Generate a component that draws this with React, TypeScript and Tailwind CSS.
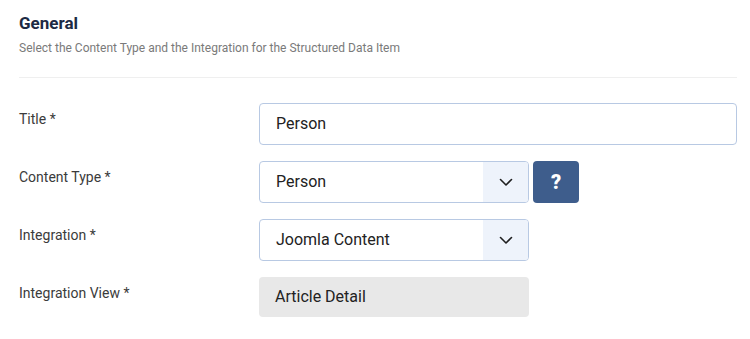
import { ReactNode } from "react";

const font = { fontFamily: "Roboto, 'Liberation Sans', sans-serif" };

function Chevron() {
  return (
    <svg width="14" height="9" viewBox="0 0 14 9" fill="none">
      <path d="M1.5 1.5 7 7l5.5-5.5" stroke="#1f1f1f" strokeWidth="1.6" strokeLinecap="round" strokeLinejoin="round" />
    </svg>
  );
}

function Row({ label, children }: { label: string; children: ReactNode }) {
  return (
    <div className="flex items-start">
      <label className="w-[240px] shrink-0 pt-[6px] text-[14px] leading-5 text-[#3b3b3b]">{label}</label>
      {children}
    </div>
  );
}

function Select({ value }: { value: string }) {
  return (
    <div className="flex h-[42px] w-[270px] overflow-hidden rounded-[4px] border border-[#b8c9e3] bg-white">
      <div className="flex flex-1 items-center pl-4 text-base text-[#222]">{value}</div>
      <div className="flex w-[45px] items-center justify-center bg-[#eef3fb]">
        <Chevron />
      </div>
    </div>
  );
}

export default function App() {
  return (
    <div className="h-[339px] w-[750px] bg-white pl-[19px] pr-[13px] pt-[11px]" style={font}>
      <h2 className="text-[17px] font-bold leading-6 text-[#1d2a44]">General</h2>
      <p className="mt-[4px] text-[12px] leading-[18px] text-[#7a7a7a]">
        Select the Content Type and the Integration for the Structured Data Item
      </p>
      <div className="mt-[20px] h-px bg-[#efefef]" />

      <div className="mt-[25px] flex flex-col gap-[16px]">
        <Row label="Title *">
          <div className="flex h-[42px] flex-1 items-center rounded-[4px] border border-[#b8c9e3] bg-white pl-4 text-base text-[#222]">
            Person
          </div>
        </Row>
        <Row label="Content Type *">
          <div className="flex items-center gap-[4px]">
            <Select value="Person" />
            <button className="flex h-[42px] w-[46px] items-center justify-center rounded-[4px] bg-[#3e5d8c] text-[20px] font-black text-white">
              ?
            </button>
          </div>
        </Row>
        <Row label="Integration *">
          <Select value="Joomla Content" />
        </Row>
        <Row label="Integration View *">
          <div className="flex h-[40px] w-[270px] items-center rounded-[4px] bg-[#e8e8e8] pl-4 text-base text-[#222]">
            Article Detail
          </div>
        </Row>
      </div>
    </div>
  );
}
